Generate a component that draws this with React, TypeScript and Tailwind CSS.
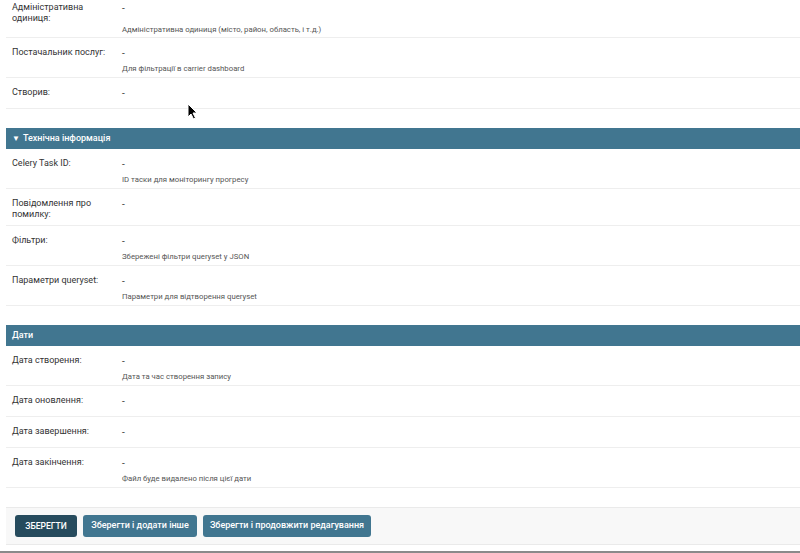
type Field = {
  label: string;
  help?: string;
  twoLine?: boolean;
};

type Section = {
  title?: string;
  collapsible?: boolean;
  fields: Field[];
};

const sections: Section[] = [
  {
    fields: [
      {
        label: 'Адміністративна\nодиниця:',
        help: 'Адміністративна одиниця (місто, район, область, і т.д.)',
        twoLine: true,
      },
      { label: 'Постачальник послуг:', help: 'Для фільтрації в carrier dashboard' },
      { label: 'Створив:' },
    ],
  },
  {
    title: 'Технічна інформація',
    collapsible: true,
    fields: [
      { label: 'Celery Task ID:', help: 'ID таски для моніторингу прогресу' },
      { label: 'Повідомлення про\nпомилку:', twoLine: true },
      { label: 'Фільтри:', help: 'Збережені фільтри queryset у JSON' },
      { label: 'Параметри queryset:', help: 'Параметри для відтворення queryset' },
    ],
  },
  {
    title: 'Дати',
    fields: [
      { label: 'Дата створення:', help: 'Дата та час створення запису' },
      { label: 'Дата оновлення:' },
      { label: 'Дата завершення:' },
      { label: 'Дата закінчення:', help: 'Файл буде видалено після цієї дати' },
    ],
  },
];

function FormRow({ field, first }: { field: Field; first: boolean }) {
  return (
    <div
      className={`border-b border-[#eeeeee] pl-[6px] ${first ? 'pt-0 pb-[3px]' : 'pt-[7px] pb-[4px]'}`}
    >
      <div className="flex">
        <div
          className={`w-[110px] shrink-0 whitespace-pre pt-[2px] text-[9px] leading-[11px] text-[#333] ${
            field.twoLine ? 'pb-[1px]' : ''
          }`}
        >
          {field.label}
        </div>
        <div className="pt-[4px] pb-[5px] text-[10px] leading-[10px] text-[#444]">-</div>
      </div>
      {field.help && (
        <div className="ml-[110px] text-[7.75px] leading-[9px] text-[#555]">{field.help}</div>
      )}
    </div>
  );
}

function Fieldset({ section, index }: { section: Section; index: number }) {
  return (
    <div className="mb-[19px]">
      {section.title && (
        <div className="flex h-[21px] items-center bg-[#417690] pl-[6px] text-[9px] font-medium text-white">
          {section.collapsible && <span className="mr-[3px] text-[8px] leading-none">▼</span>}
          {section.title}
        </div>
      )}
      {section.fields.map((f, i) => (
        <FormRow key={f.label} field={f} first={index === 0 && i === 0} />
      ))}
    </div>
  );
}

function Cursor() {
  return (
    <svg
      className="absolute left-[187px] top-[103px]"
      width="11"
      height="17"
      viewBox="0 0 11 17"
    >
      <path
        d="M1 1 L1 14 L4 11 L6.5 16 L8.5 15 L6 10 L10 10 Z"
        fill="#000"
        stroke="#fff"
        strokeWidth="1"
        strokeLinejoin="round"
      />
    </svg>
  );
}

export default function App() {
  return (
    <div className="relative h-[553px] w-[800px] overflow-hidden bg-white font-['Roboto',sans-serif]">
      <div className="ml-[6px]">
        {sections.map((s, i) => (
          <Fieldset key={i} section={s} index={i} />
        ))}

        <div className="flex gap-[6px] border-y border-[#eaeaea] bg-[#f8f8f8] py-[7px] pl-[9px]">
          <button className="h-[22px] w-[62px] whitespace-nowrap rounded-[3px] bg-[#264b5d] text-[8.5px] font-medium text-white">
            ЗБЕРЕГТИ
          </button>
          <button className="h-[22px] w-[114px] whitespace-nowrap rounded-[3px] bg-[#417690] text-[9px] font-medium text-white">
            Зберегти і додати інше
          </button>
          <button className="h-[22px] w-[168px] whitespace-nowrap rounded-[3px] bg-[#417690] text-[9px] font-medium text-white">
            Зберегти і продовжити редагування
          </button>
        </div>
      </div>
      <div className="mt-[6px] h-[2px] bg-[#8a8a8a]" />
      <Cursor />
    </div>
  );
}
